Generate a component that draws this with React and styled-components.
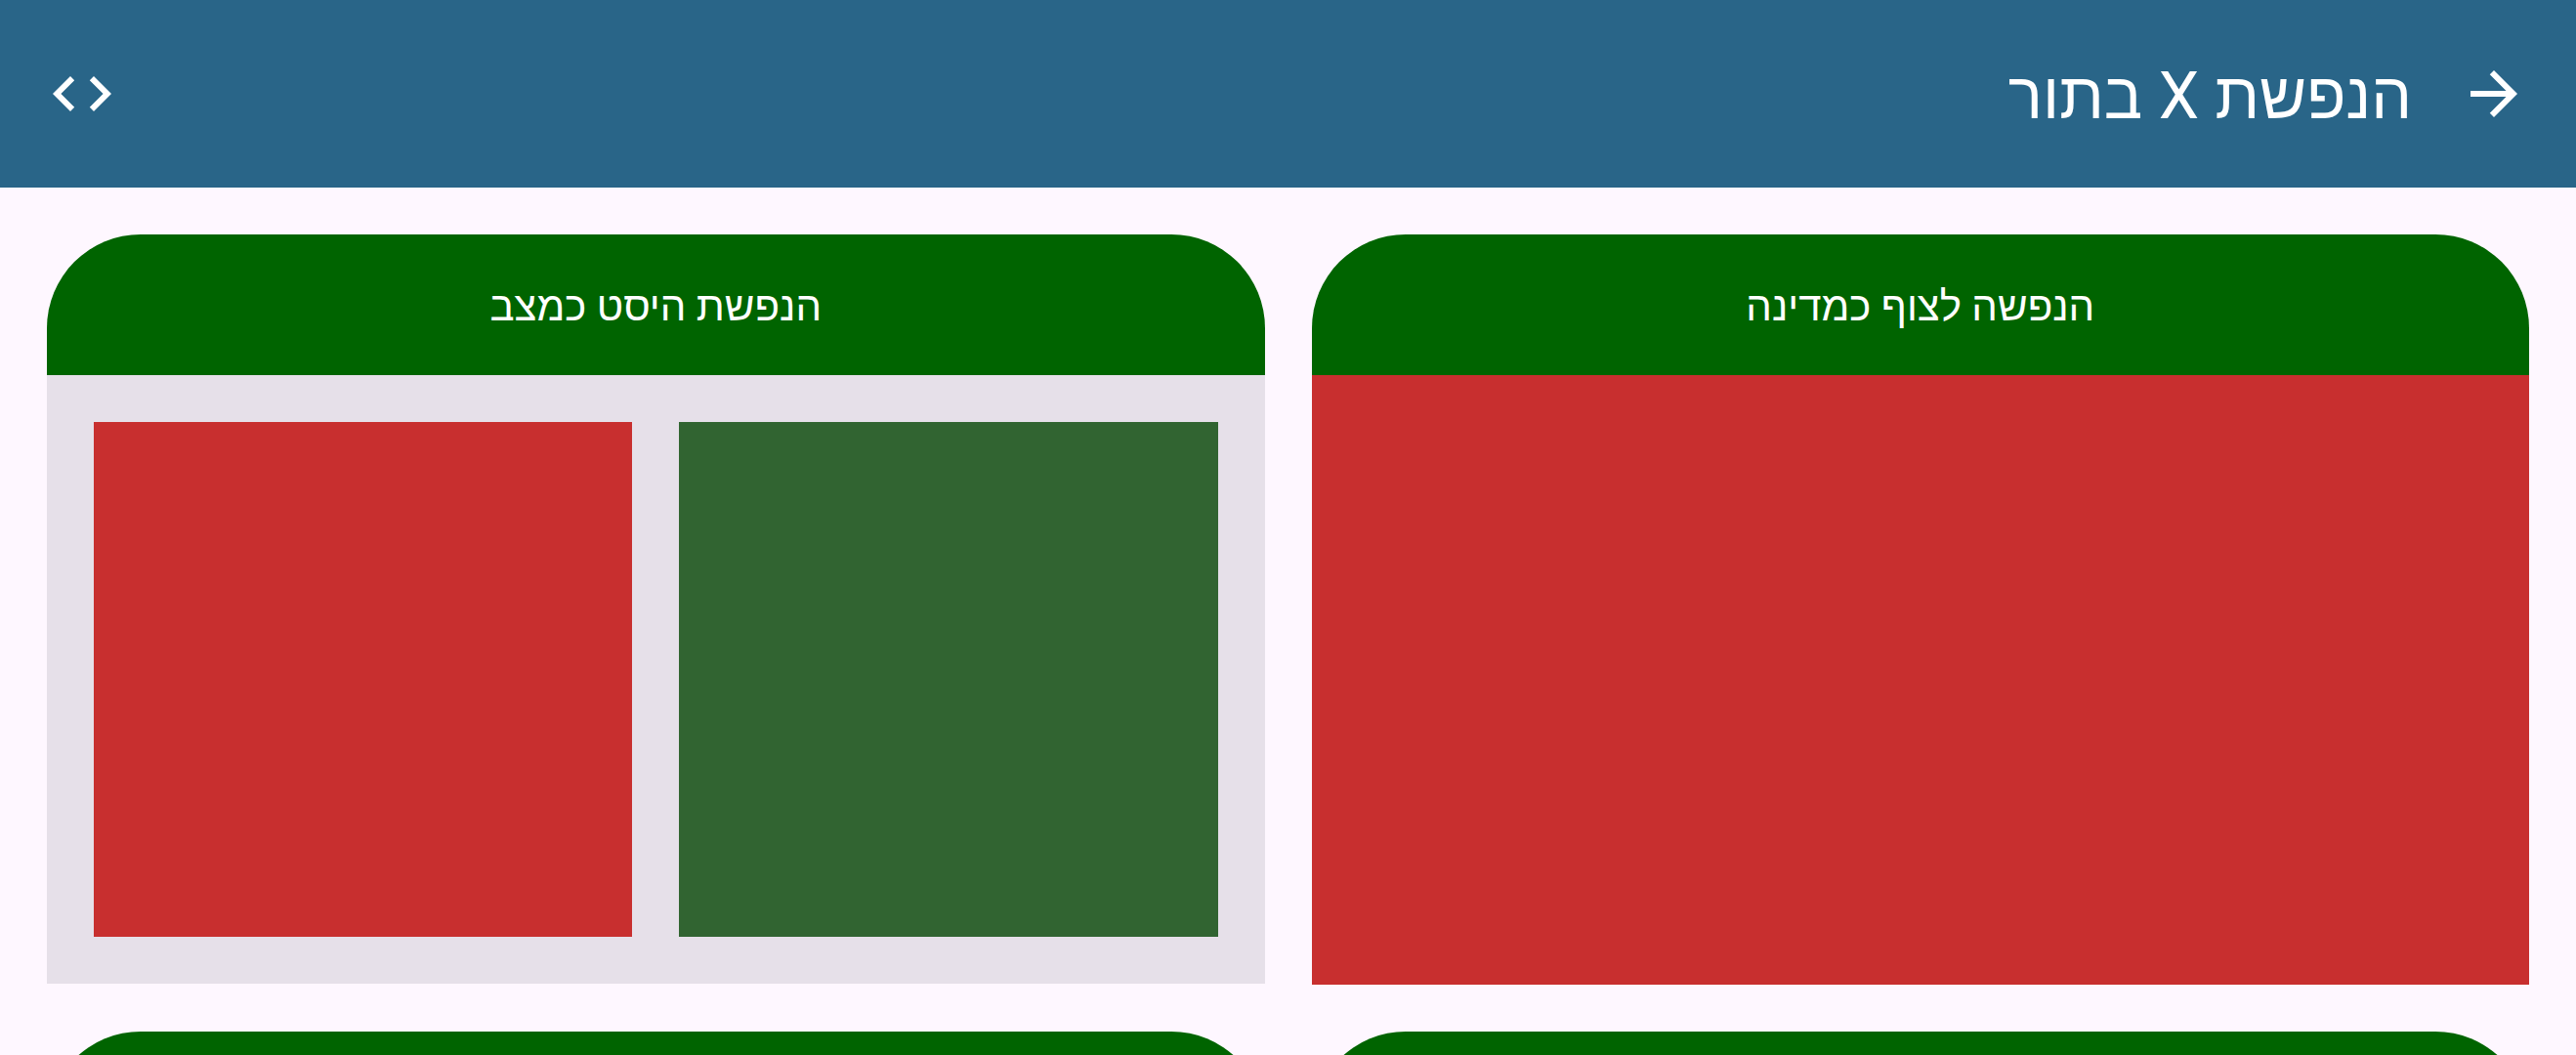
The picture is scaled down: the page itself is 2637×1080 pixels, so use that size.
import React from "react";
import styled, { createGlobalStyle } from "styled-components";

const GlobalStyle = createGlobalStyle`
  * { box-sizing: border-box; }
  body { margin: 0; background: #fef7ff; font-family: Roboto, "Liberation Sans", sans-serif; }
  #root { height: 100vh; overflow: hidden; }
`;
const Page = styled.div`
  min-height: 100vh;
`;
const AppBar = styled.header`
  display: flex;
  align-items: center;
  height: 192px;
  padding: 0 48px;
  gap: 48px;
  background: #296588;
  color: #fff;
`;
const Title = styled.h1`
  flex: 1;
  margin: 0;
  padding-top: 6px;
  font-size: 66px;
  font-weight: 400;
  line-height: 84px;
`;
const IconButton = styled.button`
  display: flex;
  padding: 0;
  border: 0;
  background: none;
  color: inherit;
  svg { width: 72px; height: 72px; fill: currentColor; }
`;
const Grid = styled.main`
  display: grid;
  grid-template-columns: 1fr 1fr;
  gap: 48px;
  padding: 48px;
`;
const Card = styled.section`
  display: flex;
  flex-direction: column;
  min-width: 0;
`;
const CardTitle = styled.h2`
  display: flex;
  align-items: center;
  justify-content: center;
  height: 144px;
  margin: 0;
  padding-top: 4px;
  border-radius: 96px 96px 0 0;
  background: #006400;
  color: #fff;
  font-size: 42px;
  font-weight: 400;
  line-height: 60px;
`;
const Panel = styled.div`
  display: flex;
  gap: 48px;
  height: ${(p) => (p.$inset ? "623px" : "624px")};
  padding: ${(p) => (p.$inset ? "48px" : "0")};
  background: #e6e0e9;
`;
const Swatch = styled.div`
  flex: 1;
  background: ${(p) => p.$color};
`;

const RED = "#c82f2f";
const GREEN = "#316431";
const cards = [
  { title: "הנפשה לצוף כמדינה", colors: [RED] },
  { title: "הנפשת היסט כמצב", colors: [GREEN, RED], inset: true },
  { title: "", colors: [RED] },
  { title: "", colors: [RED] },
];

export default function App() {
  return (
    <Page dir="rtl" lang="he">
      <GlobalStyle />
      <AppBar>
        <IconButton aria-label="חזרה">
          <svg viewBox="0 0 24 24"><path d="M12 4l-1.41 1.41L16.17 11H4v2h12.17l-5.58 5.59L12 20l8-8z" /></svg>
        </IconButton>
        <Title>הנפשת X בתור</Title>
        <IconButton aria-label="קוד">
          <svg viewBox="0 0 24 24"><path d="M9.4 16.6 4.8 12l4.6-4.6L8 6l-6 6 6 6 1.4-1.4zm5.2 0 4.6-4.6-4.6-4.6L16 6l6 6-6 6-1.4-1.4z" /></svg>
        </IconButton>
      </AppBar>
      <Grid>
        {cards.map((card, i) => (
          <Card key={i}>
            <CardTitle>{card.title}</CardTitle>
            <Panel $inset={card.inset}>
              {card.colors.map((c) => <Swatch key={c} $color={c} />)}
            </Panel>
          </Card>
        ))}
      </Grid>
    </Page>
  );
}
